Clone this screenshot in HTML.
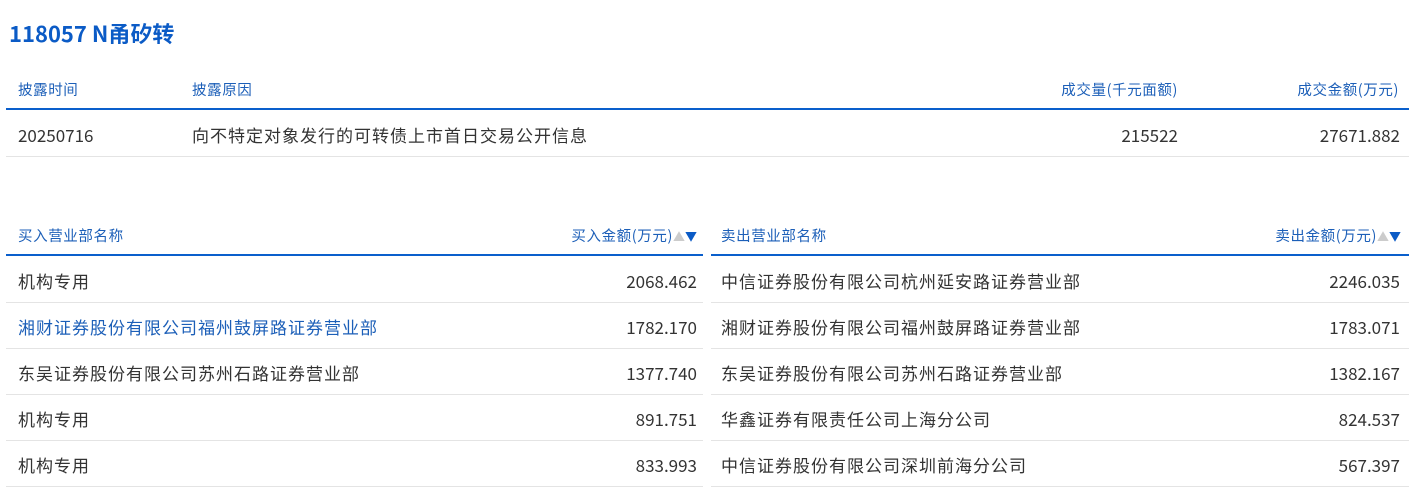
<!DOCTYPE html>
<html><head><meta charset="utf-8"><style>
*{margin:0;padding:0;box-sizing:border-box}
body{width:1423px;height:492px;background:#fff;font-family:"Noto Sans CJK SC","Liberation Sans",sans-serif;color:#333;position:relative;overflow:hidden}
.t{position:absolute;left:9px;top:19px;font-size:22px;line-height:28px;font-weight:bold;color:#0b5bc6}
.a{position:absolute;white-space:nowrap;line-height:20px}
.h{font-size:14.5px;color:#1c5fb8;letter-spacing:0.6px}
.d{font-size:17px;color:#333}
.c{letter-spacing:1px}
.bl{position:absolute;height:2px;background:#0a5fcc}
.gl{position:absolute;height:1px;background:#e4e4e4}
.r{text-align:right}
.link{color:#1c5fb8}
.s{font-size:12px;letter-spacing:0}
</style></head><body>
<div class="t">118057 N甬矽转</div>
<div class="a h" style="left:18px;top:80px">披露时间</div>
<div class="a h" style="left:192px;top:80px">披露原因</div>
<div class="a h r" style="right:245px;top:80px">成交量(千元面额)</div>
<div class="a h r" style="right:24px;top:80px">成交金额(万元)</div>
<div class="bl" style="left:6px;width:1403px;top:108px"></div>
<div class="a d" style="left:18px;top:125px">20250716</div>
<div class="a d c" style="left:192px;top:125px">向不特定对象发行的可转债上市首日交易公开信息</div>
<div class="a d r" style="right:245px;top:125px">215522</div>
<div class="a d r" style="right:23px;top:125px">27671.882</div>
<div class="gl" style="left:6px;width:1403px;top:156px"></div>

<div class="a h" style="left:18px;top:226px">买入营业部名称</div>
<div class="a h r" style="right:726px;top:226px">买入金额(万元)<span class="s" style="color:#ccc">▲</span><span class="s" style="color:#0b5bc6">▼</span></div>
<div class="bl" style="left:6px;width:697px;top:254px"></div>
<div class="a h" style="left:721px;top:226px">卖出营业部名称</div>
<div class="a h r" style="right:22px;top:226px">卖出金额(万元)<span class="s" style="color:#ccc">▲</span><span class="s" style="color:#0b5bc6">▼</span></div>
<div class="bl" style="left:711px;width:698px;top:254px"></div>

<div class="a d c" style="left:18px;top:271px">机构专用</div><div class="a d r" style="right:726px;top:271px">2068.462</div>
<div class="a d c" style="left:721px;top:271px">中信证券股份有限公司杭州延安路证券营业部</div><div class="a d r" style="right:23px;top:271px">2246.035</div>
<div class="gl" style="left:6px;width:697px;top:302px"></div><div class="gl" style="left:711px;width:698px;top:302px"></div>

<div class="a d c link" style="left:18px;top:317px">湘财证券股份有限公司福州鼓屏路证券营业部</div><div class="a d r" style="right:726px;top:317px">1782.170</div>
<div class="a d c" style="left:721px;top:317px">湘财证券股份有限公司福州鼓屏路证券营业部</div><div class="a d r" style="right:23px;top:317px">1783.071</div>
<div class="gl" style="left:6px;width:697px;top:348px"></div><div class="gl" style="left:711px;width:698px;top:348px"></div>

<div class="a d c" style="left:18px;top:363px">东吴证券股份有限公司苏州石路证券营业部</div><div class="a d r" style="right:726px;top:363px">1377.740</div>
<div class="a d c" style="left:721px;top:363px">东吴证券股份有限公司苏州石路证券营业部</div><div class="a d r" style="right:23px;top:363px">1382.167</div>
<div class="gl" style="left:6px;width:697px;top:394px"></div><div class="gl" style="left:711px;width:698px;top:394px"></div>

<div class="a d c" style="left:18px;top:409px">机构专用</div><div class="a d r" style="right:726px;top:409px">891.751</div>
<div class="a d c" style="left:721px;top:409px">华鑫证券有限责任公司上海分公司</div><div class="a d r" style="right:23px;top:409px">824.537</div>
<div class="gl" style="left:6px;width:697px;top:440px"></div><div class="gl" style="left:711px;width:698px;top:440px"></div>

<div class="a d c" style="left:18px;top:455px">机构专用</div><div class="a d r" style="right:726px;top:455px">833.993</div>
<div class="a d c" style="left:721px;top:455px">中信证券股份有限公司深圳前海分公司</div><div class="a d r" style="right:23px;top:455px">567.397</div>
<div class="gl" style="left:6px;width:697px;top:486px"></div><div class="gl" style="left:711px;width:698px;top:486px"></div>
</body></html>
